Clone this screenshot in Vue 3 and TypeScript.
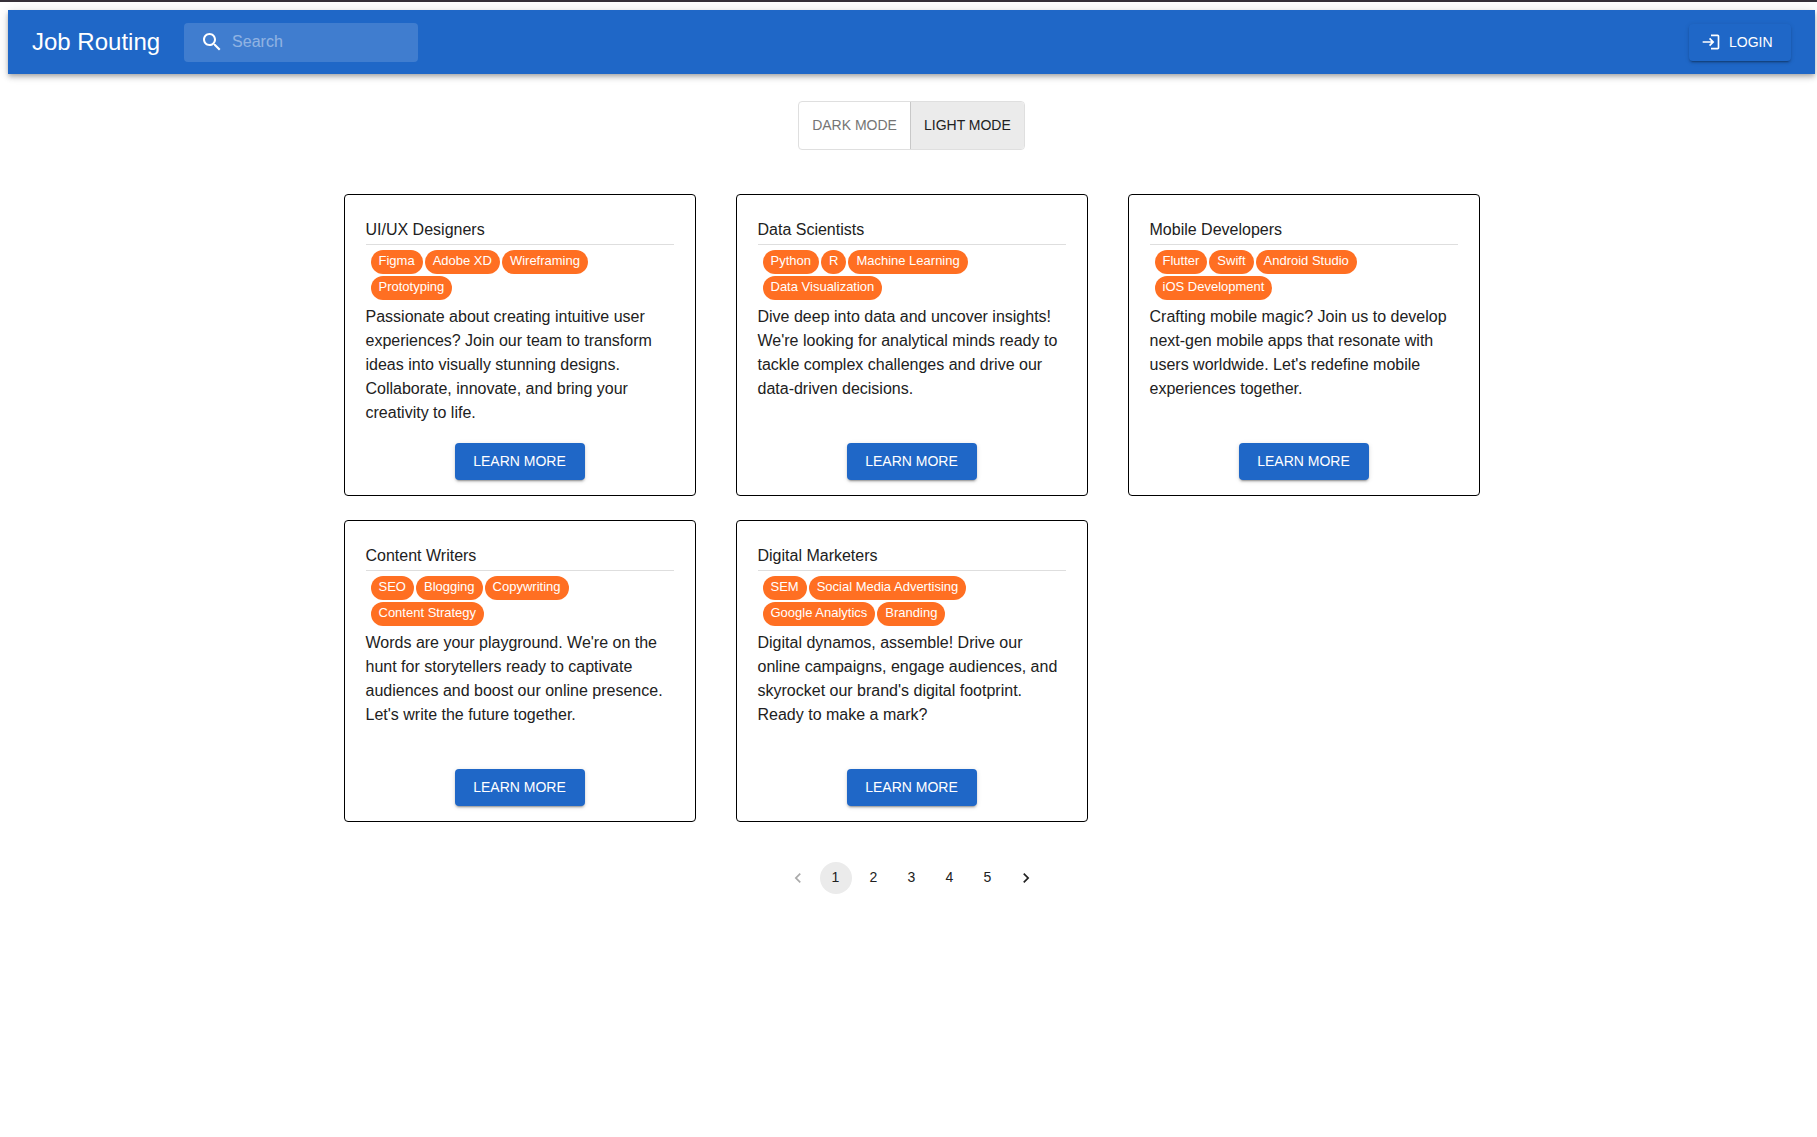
<script setup lang="ts">
import { ref } from 'vue'

interface Job {
  title: string
  skills: string[]
  description: string
}

const jobs: Job[] = [
  {
    title: 'UI/UX Designers',
    skills: ['Figma', 'Adobe XD', 'Wireframing', 'Prototyping'],
    description:
      'Passionate about creating intuitive user experiences? Join our team to transform ideas into visually stunning designs. Collaborate, innovate, and bring your creativity to life.',
  },
  {
    title: 'Data Scientists',
    skills: ['Python', 'R', 'Machine Learning', 'Data Visualization'],
    description:
      "Dive deep into data and uncover insights! We're looking for analytical minds ready to tackle complex challenges and drive our data-driven decisions.",
  },
  {
    title: 'Mobile Developers',
    skills: ['Flutter', 'Swift', 'Android Studio', 'iOS Development'],
    description:
      "Crafting mobile magic? Join us to develop next-gen mobile apps that resonate with users worldwide. Let's redefine mobile experiences together.",
  },
  {
    title: 'Content Writers',
    skills: ['SEO', 'Blogging', 'Copywriting', 'Content Strategy'],
    description:
      "Words are your playground. We're on the hunt for storytellers ready to captivate audiences and boost our online presence. Let's write the future together.",
  },
  {
    title: 'Digital Marketers',
    skills: ['SEM', 'Social Media Advertising', 'Google Analytics', 'Branding'],
    description:
      "Digital dynamos, assemble! Drive our online campaigns, engage audiences, and skyrocket our brand's digital footprint. Ready to make a mark?",
  },
]

const query = ref('')
const mode = ref<'dark' | 'light'>('light')
const pageCount = 5
const page = ref(1)
</script>

<template>
  <div class="page">
    <header class="bar">
      <h1 class="brand">Job Routing</h1>
      <label class="search">
        <svg class="icon" viewBox="0 0 24 24" aria-hidden="true">
          <path d="M15.5 14h-.79l-.28-.27C15.41 12.59 16 11.11 16 9.5 16 5.91 13.09 3 9.5 3S3 5.91 3 9.5 5.91 16 9.5 16c1.61 0 3.09-.59 4.23-1.57l.27.28v.79l5 4.99L20.49 19l-4.99-5zm-6 0C7.01 14 5 11.99 5 9.5S7.01 5 9.5 5 14 7.01 14 9.5 11.99 14 9.5 14z" />
        </svg>
        <input v-model="query" type="text" placeholder="Search" aria-label="Search" />
      </label>
      <button class="btn login" type="button">
        <svg class="icon small" viewBox="0 0 24 24" aria-hidden="true">
          <path d="M11 7 9.6 8.4l2.6 2.6H2v2h10.2l-2.6 2.6L11 17l5-5-5-5zm9 12h-8v2h8c1.1 0 2-.9 2-2V5c0-1.1-.9-2-2-2h-8v2h8v14z" />
        </svg>
        <span class="label">LOGIN</span>
      </button>
    </header>

    <main class="content">
      <div class="modes" role="group" aria-label="Color mode">
        <button type="button" :class="{ active: mode === 'dark' }" :aria-pressed="mode === 'dark'" @click="mode = 'dark'">DARK MODE</button>
        <button type="button" :class="{ active: mode === 'light' }" :aria-pressed="mode === 'light'" @click="mode = 'light'">LIGHT MODE</button>
      </div>

      <section class="jobs" aria-label="Jobs">
        <article v-for="job in jobs" :key="job.title" class="card">
          <h2 class="title">{{ job.title }}</h2>
          <ul class="skills">
            <li v-for="skill in job.skills" :key="skill">{{ skill }}</li>
          </ul>
          <p class="description">{{ job.description }}</p>
          <button class="btn more" type="button">LEARN MORE</button>
        </article>
      </section>

      <nav class="pages" aria-label="Pagination">
        <button type="button" aria-label="Previous page" :disabled="page === 1" @click="page--">
          <svg class="icon chevron" viewBox="0 0 24 24" aria-hidden="true">
            <path d="M15.41 7.41 14 6l-6 6 6 6 1.41-1.41L10.83 12z" />
          </svg>
        </button>
        <button v-for="n in pageCount" :key="n" type="button" class="number" :class="{ current: n === page }" :aria-current="n === page ? 'page' : undefined" @click="page = n">{{ n }}</button>
        <button type="button" aria-label="Next page" :disabled="page === pageCount" @click="page++">
          <svg class="icon chevron" viewBox="0 0 24 24" aria-hidden="true">
            <path d="M10 6 8.59 7.41 13.17 12l-4.58 4.59L10 18l6-6z" />
          </svg>
        </button>
      </nav>
    </main>
  </div>
</template>

<style>
body {
  background: #fff;
}
</style>

<style scoped>
.page {
  border-top: 2px solid #363038;
  padding: 8px 2px 40px 8px;
  color: #212121;
  font-family: 'Liberation Sans', Arial, Helvetica, sans-serif;
  font-size: 16px;
  line-height: 24px;
}

.page * {
  box-sizing: border-box;
}

button {
  border: 0;
  padding: 0;
  background: none;
  color: inherit;
  font: inherit;
  font-size: 14px;
  cursor: pointer;
}

.icon {
  width: 24px;
  height: 24px;
  flex: none;
  fill: currentColor;
}

.icon.small,
.icon.chevron {
  width: 20px;
  height: 20px;
}

.bar {
  display: flex;
  align-items: center;
  height: 64px;
  padding: 0 24px;
  background: #1f67c7;
  color: #fff;
  box-shadow:
    0 2px 4px -1px rgba(0, 0, 0, 0.2),
    0 4px 5px rgba(0, 0, 0, 0.14),
    0 1px 10px rgba(0, 0, 0, 0.12);
}

.brand {
  margin: 0;
  font-size: 24px;
  font-weight: 400;
  line-height: 32px;
}

.search {
  display: flex;
  align-items: center;
  width: 234px;
  height: 39px;
  margin-left: 24px;
  padding: 0 16px;
  gap: 8px;
  border-radius: 4px;
  background: rgba(255, 255, 255, 0.15);
}

.search input {
  width: 100%;
  min-width: 0;
  border: 0;
  padding: 0;
  outline: 0;
  background: none;
  color: inherit;
  font: inherit;
}

.search input::placeholder {
  color: #fff;
  opacity: 0.42;
}

.btn {
  display: flex;
  align-items: center;
  height: 37px;
  border-radius: 4px;
  background: #1f67c7;
  color: #fff;
  box-shadow:
    0 3px 1px -2px rgba(0, 0, 0, 0.2),
    0 2px 2px rgba(0, 0, 0, 0.14),
    0 1px 5px rgba(0, 0, 0, 0.12);
}

.login {
  width: 102px;
  margin-left: auto;
  padding-left: 12px;
  gap: 8px;
}

.content {
  display: flex;
  flex-direction: column;
  align-items: center;
  padding-top: 27px;
}

.modes {
  display: flex;
  height: 49px;
  border: 1px solid #dfdfdf;
  border-radius: 4px;
  overflow: hidden;
}

.modes button {
  padding: 0 13px 2px;
  color: #757575;
}

.modes button + button {
  border-left: 1px solid #c8c8c8;
}

.modes .active {
  background: #ebebeb;
  color: #212121;
}

.jobs {
  display: grid;
  grid-template-columns: repeat(auto-fit, minmax(352px, 1fr));
  grid-auto-rows: 1fr;
  gap: 24px 40px;
  width: 100%;
  max-width: 1136px;
  margin-top: 44px;
}

.card {
  display: flex;
  flex-direction: column;
  padding: 21px 21px 15px;
  border: 1px solid #000;
  border-radius: 4px;
}

.title {
  margin: 0;
  padding: 2px 0;
  border-bottom: 1px solid #dedede;
  font-size: 16px;
  font-weight: 400;
}

.skills {
  display: flex;
  flex-wrap: wrap;
  gap: 2px;
  margin: 5px;
  padding: 0;
  list-style: none;
}

.skills li {
  height: 24px;
  padding: 0 8px;
  border-radius: 12px;
  background: #ff6f22;
  color: #fff;
  font-size: 13px;
  line-height: 22px;
}

.description {
  margin: 0 0 18px;
}

.more {
  justify-content: center;
  width: 130px;
  margin: auto auto 0;
  padding-bottom: 2px;
}

.pages {
  display: flex;
  gap: 6px;
  margin-top: 40px;
}

.pages button {
  display: flex;
  align-items: center;
  justify-content: center;
  width: 32px;
  height: 32px;
  border-radius: 16px;
}

.pages .number {
  padding-bottom: 2px;
}

.pages .current {
  background: #ebebeb;
}

.pages button:disabled {
  opacity: 0.38;
  cursor: default;
}
</style>
